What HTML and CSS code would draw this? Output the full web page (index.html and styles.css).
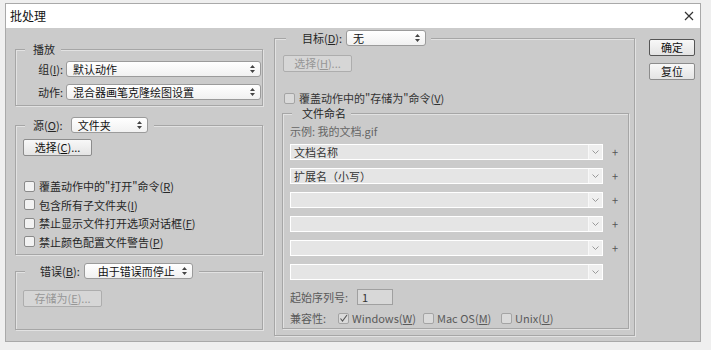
FILE: index.html
```html
<!DOCTYPE html>
<html lang="zh-CN">
<head>
    <meta charset="UTF-8">
    <title>批处理</title>
    <link rel="stylesheet" href="styles.css">
</head>
<body>
    <div class="dialog">
        <div class="titlebar">
            <span class="title">批处理</span>
            <svg class="close" width="10" height="10" viewBox="0 0 10 10">
                <path d="M1 1L9 9M9 1L1 9" stroke="#333" stroke-width="1.2" fill="none"/>
            </svg>
        </div>

        <div class="content">
            <!-- left column -->
            <div class="col-left">
                <fieldset class="panel panel-play">
                    <legend class="legend">播放</legend>
                    <div class="field-row">
                        <span class="row-label">组(<u>I</u>):</span>
                        <div class="select select-play">
                            <span>默认动作</span>
                            <svg class="updown" width="5" height="8" viewBox="0 0 5 8"><path d="M2.5 0L5 3H0ZM2.5 8L0 5H5Z" fill="#444"/></svg>
                        </div>
                    </div>
                    <div class="field-row">
                        <span class="row-label">动作:</span>
                        <div class="select select-play">
                            <span>混合器画笔克隆绘图设置</span>
                            <svg class="updown" width="5" height="8" viewBox="0 0 5 8"><path d="M2.5 0L5 3H0ZM2.5 8L0 5H5Z" fill="#444"/></svg>
                        </div>
                    </div>
                </fieldset>

                <fieldset class="panel panel-source">
                    <legend class="legend">
                        <div class="legend-ctl legend-source">
                            <span>源(<u>O</u>):</span>
                            <div class="select select-source">
                                <span>文件夹</span>
                                <svg class="updown" width="5" height="8" viewBox="0 0 5 8"><path d="M2.5 0L5 3H0ZM2.5 8L0 5H5Z" fill="#444"/></svg>
                            </div>
                        </div>
                    </legend>
                    <button class="btn btn-choose">选择(<u>C</u>)...</button>
                    <div class="check-list">
                        <div class="check-row"><span class="check"></span><span>覆盖动作中的"打开"命令(<u>R</u>)</span></div>
                        <div class="check-row"><span class="check"></span><span>包含所有子文件夹(<u>I</u>)</span></div>
                        <div class="check-row"><span class="check"></span><span>禁止显示文件打开选项对话框(<u>F</u>)</span></div>
                        <div class="check-row"><span class="check"></span><span>禁止颜色配置文件警告(<u>P</u>)</span></div>
                    </div>
                </fieldset>

                <fieldset class="panel panel-error">
                    <legend class="legend legend-error">
                        <div class="legend-ctl">
                            <span>错误(<u>B</u>):</span>
                            <div class="select select-error">
                                <span>由于错误而停止</span>
                                <svg class="updown" width="5" height="8" viewBox="0 0 5 8"><path d="M2.5 0L5 3H0ZM2.5 8L0 5H5Z" fill="#444"/></svg>
                            </div>
                        </div>
                    </legend>
                    <button class="btn btn-disabled btn-save">存储为(<u>E</u>)...</button>
                </fieldset>
            </div>

            <!-- right column -->
            <div class="col-right">
                <fieldset class="panel panel-target">
                    <legend class="legend legend-target">
                        <div class="legend-ctl">
                            <span>目标(<u>D</u>):</span>
                            <div class="select select-target">
                                <span>无</span>
                                <svg class="updown" width="5" height="8" viewBox="0 0 5 8"><path d="M2.5 0L5 3H0ZM2.5 8L0 5H5Z" fill="#444"/></svg>
                            </div>
                        </div>
                    </legend>
                    <button class="btn btn-disabled btn-choose">选择(<u>H</u>)...</button>
                    <div class="check-row check-row-save"><span class="check check-dim"></span><span>覆盖动作中的"存储为"命令(<u>V</u>)</span></div>

                    <fieldset class="panel panel-naming">
                        <legend class="legend legend-naming">文件命名</legend>
                        <div class="example">示例: 我的文档.gif</div>
                        <div class="combo-list">
                            <div class="combo-row">
                                <div class="combo"><span class="combo-text">文档名称</span><span class="combo-arrow"><svg width="7" height="4" viewBox="0 0 7 4"><path d="M0.5 0.5L3.5 3.5L6.5 0.5" stroke="#999" fill="none"/></svg></span></div>
                                <span class="plus">+</span>
                            </div>
                            <div class="combo-row">
                                <div class="combo"><span class="combo-text">扩展名（小写）</span><span class="combo-arrow"><svg width="7" height="4" viewBox="0 0 7 4"><path d="M0.5 0.5L3.5 3.5L6.5 0.5" stroke="#999" fill="none"/></svg></span></div>
                                <span class="plus">+</span>
                            </div>
                            <div class="combo-row">
                                <div class="combo"><span class="combo-text"></span><span class="combo-arrow"><svg width="7" height="4" viewBox="0 0 7 4"><path d="M0.5 0.5L3.5 3.5L6.5 0.5" stroke="#999" fill="none"/></svg></span></div>
                                <span class="plus">+</span>
                            </div>
                            <div class="combo-row">
                                <div class="combo"><span class="combo-text"></span><span class="combo-arrow"><svg width="7" height="4" viewBox="0 0 7 4"><path d="M0.5 0.5L3.5 3.5L6.5 0.5" stroke="#999" fill="none"/></svg></span></div>
                                <span class="plus">+</span>
                            </div>
                            <div class="combo-row">
                                <div class="combo"><span class="combo-text"></span><span class="combo-arrow"><svg width="7" height="4" viewBox="0 0 7 4"><path d="M0.5 0.5L3.5 3.5L6.5 0.5" stroke="#999" fill="none"/></svg></span></div>
                                <span class="plus">+</span>
                            </div>
                            <div class="combo-row">
                                <div class="combo"><span class="combo-text"></span><span class="combo-arrow"><svg width="7" height="4" viewBox="0 0 7 4"><path d="M0.5 0.5L3.5 3.5L6.5 0.5" stroke="#999" fill="none"/></svg></span></div>
                            </div>
                        </div>

                        <div class="serial-row">
                            <span class="serial-label">起始序列号:</span>
                            <div class="num-input">1</div>
                        </div>

                        <div class="compat-row">
                            <span class="compat-label">兼容性:</span>
                            <div class="compat-opt opt-win">
                                <span class="check check-dim">
                                    <svg width="9" height="9" viewBox="0 0 9 9"><path d="M1.5 4.5L3.5 7L8 1" stroke="#555" stroke-width="1.1" fill="none"/></svg>
                                </span>
                                <span>Windows(<u>W</u>)</span>
                            </div>
                            <div class="compat-opt opt-mac">
                                <span class="check check-dim"></span>
                                <span>Mac OS(<u>M</u>)</span>
                            </div>
                            <div class="compat-opt">
                                <span class="check check-dim"></span>
                                <span>Unix(<u>U</u>)</span>
                            </div>
                        </div>
                    </fieldset>
                </fieldset>
            </div>

            <!-- buttons -->
            <div class="col-buttons">
                <button class="btn btn-default">确定</button>
                <button class="btn">复位</button>
            </div>
        </div>
    </div>
</body>
</html>
```

FILE: styles.css
```css
* {
    box-sizing: border-box;
}

body {
    margin: 0;
    background: #efefef;
    font-family: "Noto Sans CJK SC", "DejaVu Sans", sans-serif;
    font-size: 11px;
    line-height: 14px;
    color: #262626;
}

u {
    text-decoration-thickness: 1px;
    text-underline-offset: 1px;
}

.dialog {
    width: 696px;
    height: 339px;
    margin: 3px 0 0 5px;
    border: 1px solid #a9a9a9;
    background: #cbcbcb;
}

.titlebar {
    height: 24px;
    background: #fff;
    display: flex;
    align-items: center;
    justify-content: space-between;
    padding: 0 6px 0 4px;
}

.title {
    font-size: 12px;
    color: #111;
}

.content {
    display: flex;
    align-items: flex-start;
    padding-left: 9px;
}

.col-left {
    width: 248px;
    margin-top: 14px;
    display: flex;
    flex-direction: column;
}

.col-right {
    width: 361px;
    margin: 2px 0 0 11px;
}

.col-buttons {
    width: 46px;
    margin: 11px 0 0 14px;
    display: flex;
    flex-direction: column;
    gap: 7px;
}

/* etched group boxes */
.panel {
    margin: 0;
    padding: 0 7px;
    min-width: 0;
    border: 1px solid #a6a6a6;
    box-shadow: inset 1px 1px 0 #e2e2e2, 1px 1px 0 #e2e2e2;
}

.legend {
    margin-left: 2px;
    padding: 0 6px 0 8px;
    background: #cbcbcb;
    line-height: 14px;
}

.legend-ctl {
    display: flex;
    align-items: center;
    gap: 4px;
    height: 16px;
}

.legend-source {
    gap: 8px;
}

.panel-play {
    padding: 5px 1px 5px 7px;
}

.field-row {
    display: flex;
    align-items: center;
    gap: 3px;
    height: 16px;
}

.field-row + .field-row {
    margin-top: 7px;
}

.row-label {
    width: 40px;
    text-align: right;
}

.select {
    height: 16px;
    border: 1px solid #9b9b9b;
    border-radius: 3px;
    background: linear-gradient(#ffffff, #f1f1f1);
    display: flex;
    align-items: center;
    justify-content: space-between;
    padding: 0 5px 0 6px;
    color: #111;
}

.select-play {
    width: 195px;
}

.select-source {
    width: 77px;
}

.select-error {
    width: 109px;
}

.select-target {
    width: 80px;
}

.panel-source {
    margin-top: 11px;
    padding: 6px 7px 3px;
}

.panel-error {
    margin-top: 8px;
    padding: 11px 7px 22px;
}

.legend-error .legend-ctl span:first-child {
    margin-left: 7px;
}

.btn {
    display: block;
    height: 17px;
    padding: 0;
    border: 1px solid #8c8c8c;
    border-radius: 2px;
    background: linear-gradient(#f8f8f8, #e4e4e4);
    font-family: inherit;
    font-size: 11px;
    line-height: 15px;
    color: #111;
    text-align: center;
}

.btn-choose {
    width: 69px;
}

.btn-save {
    width: 79px;
}

.btn-disabled {
    color: #969696;
    border-color: #adadad;
    background: #d6d6d6;
}

.btn-default {
    border-color: #555;
}

.col-buttons .btn {
    width: 46px;
}

.check-list {
    margin-top: 21px;
}

.check-row {
    display: flex;
    align-items: center;
    gap: 4px;
    height: 18.5px;
    padding-left: 1px;
}

.check {
    width: 11px;
    height: 11px;
    flex-shrink: 0;
    border: 1px solid #8a8a8a;
    border-radius: 2px;
    background: #f2f2f2;
    display: flex;
    align-items: center;
    justify-content: center;
}

.check-dim {
    border-color: #a4a4a4;
    background: #dadada;
}

/* right side */
.panel-target {
    padding: 9px 6px 6px 8px;
}

.legend-target {
    margin-left: 3px;
    padding-left: 16px;
    padding-right: 5px;
}

.check-row-save {
    margin-top: 19px;
    height: 14px;
    color: #333;
}

.panel-naming {
    width: 347px;
    margin: 1px 0 0 -1px;
    padding: 4px 7px 3px;
}

.legend-naming {
    padding-left: 10px;
    padding-right: 5px;
}

.example {
    color: #666;
}

.combo-list {
    margin-top: 6px;
    display: flex;
    flex-direction: column;
    gap: 8px;
}

.combo-row {
    display: flex;
    align-items: center;
    height: 16px;
}

.combo {
    width: 313px;
    height: 16px;
    border: 1px solid #fff;
    background: #e5e5e5;
    display: flex;
}

.combo-text {
    flex: 1;
    padding-left: 3px;
    color: #333;
}

.combo-arrow {
    width: 14px;
    display: flex;
    align-items: center;
    justify-content: center;
    background: #efefef;
    border-left: 1px solid #f8f8f8;
}

.plus {
    width: 8px;
    margin-left: 8px;
    text-align: center;
    color: #555;
}

.serial-row {
    margin-top: 9px;
    display: flex;
    align-items: center;
    height: 16px;
    color: #5a5a5a;
}

.serial-label {
    width: 67px;
}

.num-input {
    width: 36px;
    height: 16px;
    border: 1px solid #a0a0a0;
    background: #d8d8d8;
    padding-left: 4px;
    color: #333;
}

.compat-row {
    margin-top: 6px;
    display: flex;
    align-items: center;
    height: 14px;
    color: #5a5a5a;
}

.compat-label {
    width: 48px;
}

.compat-opt {
    display: flex;
    align-items: center;
    gap: 3px;
}

.opt-win {
    width: 85px;
}

.opt-mac {
    width: 78px;
}
```
